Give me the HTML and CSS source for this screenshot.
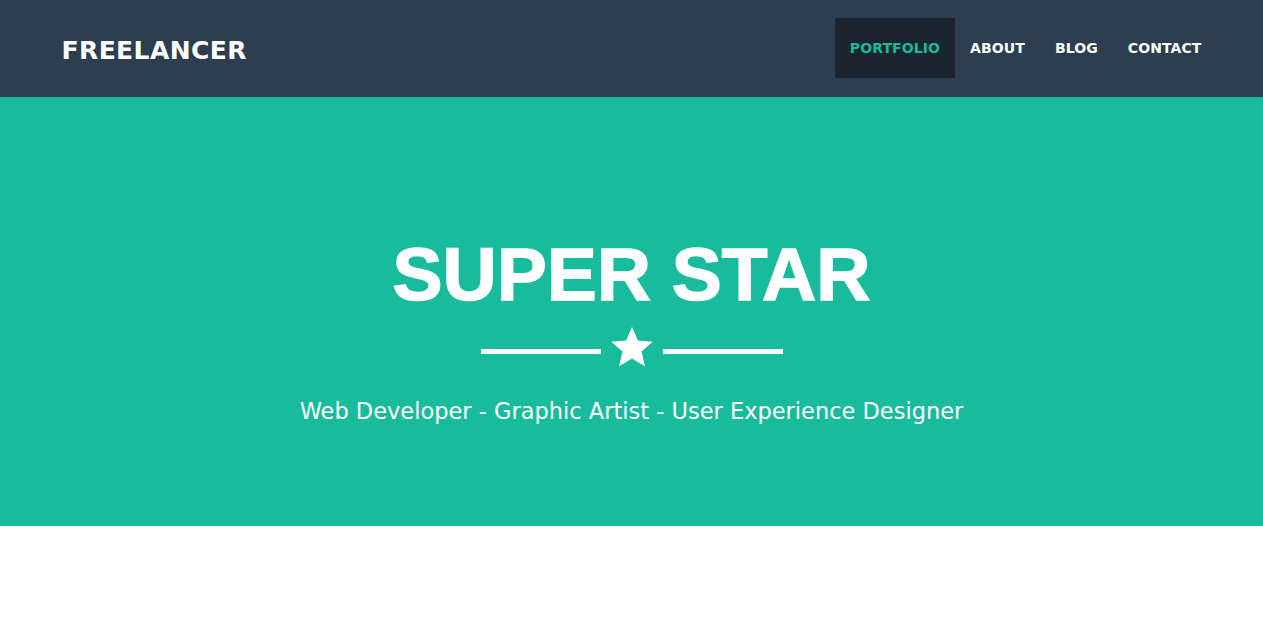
FILE: index.html
```html
<!DOCTYPE html>
<html lang="en">
<head>
<meta charset="utf-8">
<title>Freelancer</title>
<link rel="stylesheet" href="styles.css">
</head>
<body>
<nav class="navbar">
  <div class="container nav-inner">
    <a class="brand" href="#">FREELANCER</a>
    <ul class="nav-links">
      <li><a class="active" href="#">PORTFOLIO</a></li>
      <li><a href="#">ABOUT</a></li>
      <li><a href="#">BLOG</a></li>
      <li><a href="#">CONTACT</a></li>
    </ul>
  </div>
</nav>
<header class="hero">
  <h1 class="name">SUPER STAR</h1>
  <div class="divider">
    <span class="line"></span>
    <svg class="star" viewBox="0 0 24 24" width="46" height="46"><path d="M12 1.5l3.1 7.1 7.7.7-5.8 5.1 1.7 7.6L12 18l-6.7 4 1.7-7.6L1.2 9.3l7.7-.7z" fill="#fff"/></svg>
    <span class="line"></span>
  </div>
  <p class="skills">Web Developer - Graphic Artist - User Experience Designer</p>
</header>
<main class="content"></main>
</body>
</html>
```
FILE: styles.css
```css
* { box-sizing: border-box; }
body {
  margin: 0;
  font-family: "DejaVu Sans", "Liberation Sans", sans-serif;
  background: #fff;
}
.navbar {
  background: #2c3e50;
  height: 97px;
}
.container {
  width: 1170px;
  margin: 0 auto;
  padding: 0 15px;
}
.nav-inner {
  display: flex;
  align-items: flex-start;
  justify-content: space-between;
  height: 100%;
}
.brand {
  color: #fff;
  text-decoration: none;
  font-weight: bold;
  font-size: 25px;
  letter-spacing: 0.4px;
  margin-top: 36px;
  line-height: 30px;
}
.nav-links {
  list-style: none;
  margin: 18px -15px 0 0;
  padding: 0;
  display: flex;
}
.nav-links a {
  display: block;
  height: 60px;
  line-height: 61px;
  padding: 0 15px;
  color: #fff;
  text-decoration: none;
  font-weight: bold;
  font-size: 14px;
  letter-spacing: 0.1px;
}
.nav-links a.active {
  background: #1a252f;
  color: #18bc9c;
}
.hero {
  background: #18bc9c;
  height: 429px;
  color: #fff;
  text-align: center;
  padding-top: 137px;
}
.name {
  margin: 0;
  font-family: "Liberation Sans", Arial, sans-serif;
  font-weight: bold;
  font-size: 75px;
  line-height: 80px;
  -webkit-text-stroke: 1.5px #fff;
}
.divider {
  display: flex;
  justify-content: center;
  align-items: center;
  gap: 8px;
  margin-top: 10px;
  height: 46px;
}
.line {
  width: 120px;
  height: 5px;
  background: #fff;
  margin-top: 8px;
}
.star { display: block; }
.skills {
  margin: 26px 0 0;
  font-family: "DejaVu Sans", sans-serif;
  font-size: 22.5px;
  line-height: 30px;
}
.content { height: 92px; }
```
